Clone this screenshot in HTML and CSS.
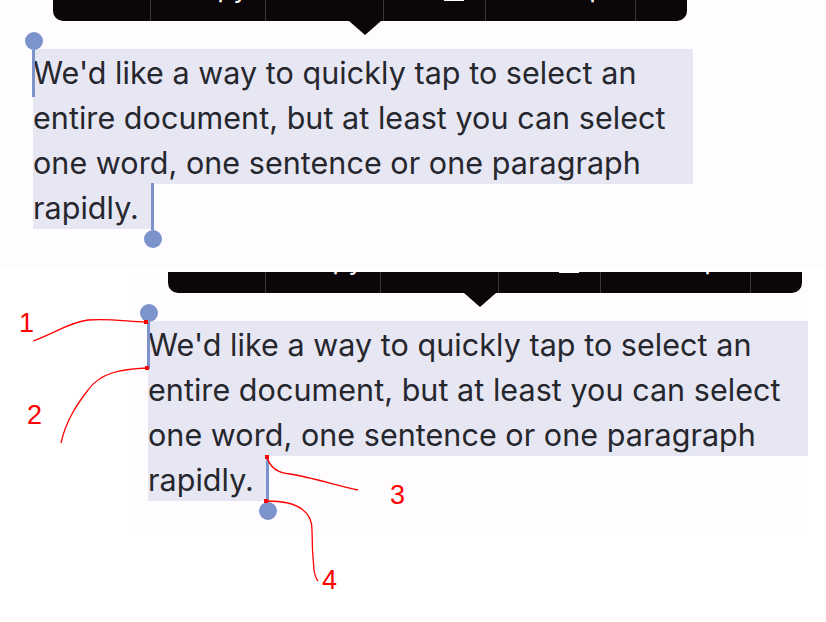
FILE: index.html
```html
<!DOCTYPE html>
<html lang="en">
<head>
<meta charset="utf-8">
<title>Text selection handles</title>
<link rel="stylesheet" href="styles.css">
</head>
<body>
<div class="page">
  <section class="shot shot-a">
    <div class="canvas">
      <div class="callout">
        <span class="item w1">Cut</span>
        <span class="item w2">Copy</span>
        <span class="item w3">Paste</span>
        <span class="item w4"><b>B</b><i>I</i><u>U</u></span>
        <span class="item w5">Look Up</span>
        <span class="item w6">&#9656;</span>
      </div>
      <div class="pointer"></div>
      <div class="sel">
        <div class="sel-full">
          <div class="line">We'd like a way to quickly tap to select an</div>
          <div class="line">entire document, but at least you can select</div>
          <div class="line">one word, one sentence or one paragraph</div>
        </div>
        <div class="line"><span class="sel-last">rapidly. </span></div>
      </div>
      <div class="handle handle-start"><span class="knob"></span><span class="stem"></span></div>
      <div class="handle handle-end"><span class="stem"></span><span class="knob"></span></div>
    </div>
  </section>

  <section class="shot shot-b">
    <div class="canvas">
      <div class="callout">
        <span class="item w1">Cut</span>
        <span class="item w2">Copy</span>
        <span class="item w3">Paste</span>
        <span class="item w4"><b>B</b><i>I</i><u>U</u></span>
        <span class="item w5">Look Up</span>
        <span class="item w6">&#9656;</span>
      </div>
      <div class="pointer"></div>
      <div class="sel">
        <div class="sel-full">
          <div class="line">We'd like a way to quickly tap to select an</div>
          <div class="line">entire document, but at least you can select</div>
          <div class="line">one word, one sentence or one paragraph</div>
        </div>
        <div class="line"><span class="sel-last">rapidly. </span></div>
      </div>
      <div class="handle handle-start"><span class="knob"></span><span class="stem"></span></div>
      <div class="handle handle-end"><span class="stem"></span><span class="knob"></span></div>
    </div>
  </section>

  <svg class="notes" width="826" height="622" viewBox="0 0 826 622">
    <g class="curves">
      <path d="M33,341 C55,333 70,322 88,320 C110,318 130,322 146,322"/>
      <path d="M147,368 C120,369 100,373 88,390 C78,403 66,420 61,443"/>
      <path d="M267,457 C270,468 278,473 290,474 C310,477 335,485 358,490"/>
      <path d="M266,501 C280,501 295,503 303,510 C310,515 312,522 312,530 C312,545 313,560 314,570 C315,576 316,579 318,581"/>
    </g>
    <g class="dots">
      <rect x="144" y="320" width="4" height="4"/>
      <rect x="145" y="366" width="4" height="4"/>
      <rect x="265" y="455" width="4" height="4"/>
      <rect x="264" y="499" width="4" height="4"/>
    </g>
    <g class="labels">
      <text x="19" y="332">1</text>
      <text x="27" y="424">2</text>
      <text x="390" y="504">3</text>
      <text x="322" y="589">4</text>
    </g>
  </svg>
</div>
</body>
</html>
```
FILE: styles.css
```css
* { box-sizing: border-box; }
html, body { margin: 0; padding: 0; background: #ffffff; }
body { width: 826px; height: 622px; overflow: hidden; }

.page {
  position: relative;
  width: 826px;
  height: 622px;
  display: flex;
  flex-direction: column;
}

.shot {
  position: relative;
  overflow: hidden;
  background: #fefcfe;
}
.shot-a { width: 826px; height: 268px; }
.shot-b { width: 678px; height: 258px; margin: 4px 0 0 130px; }

.canvas {
  position: relative;
  width: 826px;
  height: 270px;
  padding: 49px 0 0 33px;
  font-family: Inter, "Noto Sans", sans-serif;
}
.shot-b .canvas { margin-left: -15px; }

/* callout bar (menu), cropped at top */
.callout {
  position: absolute;
  left: 53px;
  top: -50px;
  width: 634px;
  height: 71px;
  background: #0b0609;
  border-radius: 10px;
  display: flex;
  color: #ffffff;
  font-size: 27px;
}
.item {
  display: flex;
  align-items: center;
  justify-content: center;
  height: 100%;
  padding-top: 3px;
  border-left: 1px solid #3a373b;
  white-space: nowrap;
}
.item:first-child { border-left: 0; }
.w1 { width: 97px; }
.w2 { width: 115px; padding-left: 14px; }
.w3 { width: 118px; }
.w4 { width: 102px; padding-left: 14px; }
.w5 { width: 150px; padding-right: 16px; }
.w6 { width: 52px; }
.w4 b, .w4 u { font-weight: 600; }
.w4 i { font-weight: 400; }

.pointer {
  position: absolute;
  left: 349px;
  top: 21px;
  width: 0;
  height: 0;
  border-left: 16px solid transparent;
  border-right: 16px solid transparent;
  border-top: 14px solid #0b0609;
}

/* selected text */
.sel { width: 660px; color: #26262d; }
.sel-full { background: #e7e7f4; }
.line {
  height: 45px;
  padding-top: 3px;
  line-height: 42px;
  font-size: 30.5px;
  letter-spacing: 0.05px;
  white-space: nowrap;
}
.sel-last {
  display: inline-block;
  width: 119px;
  height: 45px;
  margin-top: -3px;
  vertical-align: top;
  padding-top: 3px;
  background: #e7e7f4;
}

/* selection handles (overlay) */
.handle { position: absolute; width: 18px; }
.knob {
  display: block;
  width: 18px;
  height: 18px;
  border-radius: 50%;
  background: #7c93cb;
}
.stem {
  display: block;
  width: 3px;
  height: 47px;
  margin-left: 7px;
  background: #7c93cb;
}
.handle-start { left: 25px; top: 32px; }
.handle-end { left: 144px; top: 183px; }

/* annotations */
.notes {
  position: absolute;
  left: 0;
  top: 0;
  pointer-events: none;
}
.curves path { fill: none; stroke: #ff0000; stroke-width: 1.3; }
.dots rect { fill: #ff0000; }
.labels text {
  fill: #ff0000;
  font-family: "Liberation Sans", Arial, sans-serif;
  font-size: 27px;
}
```
